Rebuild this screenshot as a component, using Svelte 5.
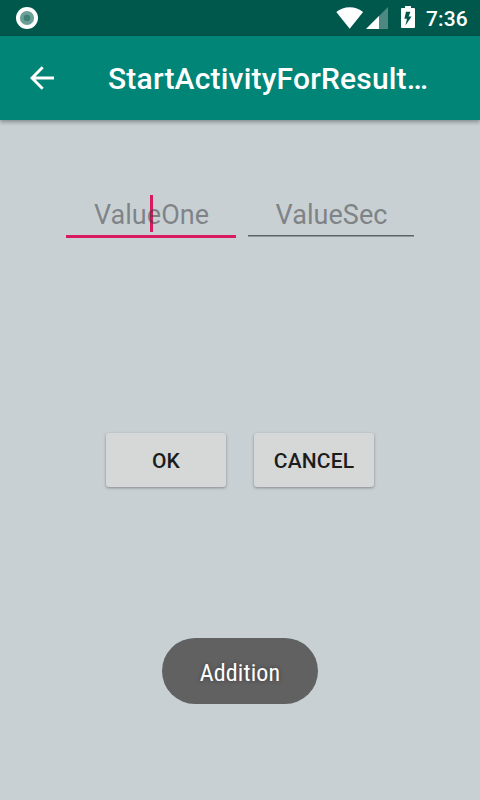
<script>
  const fields = [
    { label: 'ValueOne', focused: true },
    { label: 'ValueSec', focused: false }
  ];
  const buttons = ['OK', 'CANCEL'];
</script>

<div class="screen">
  <div class="status">
    <svg class="dot" width="22" height="22" viewBox="0 0 22 22">
      <circle cx="11" cy="11" r="11" fill="#fff" />
      <circle cx="11" cy="11" r="7.1" fill="#6b9f97" />
      <circle cx="11" cy="11" r="3.3" fill="#3d8177" />
    </svg>
    <svg class="wifi" width="28" height="22" viewBox="0 0 28 22">
      <path d="M0.3 5Q6 0.2 13.7 0.2T27.1 5L13.7 21.8Z" fill="#fff" />
    </svg>
    <svg class="signal" width="22" height="22" viewBox="0 0 22 22">
      <path d="M0 22L22 0V22Z" fill="#fff" fill-opacity=".3" />
      <path d="M0 22L13 9V22Z" fill="#fff" />
    </svg>
    <svg class="battery" width="14" height="22" viewBox="0 0 14 22">
      <path fill-rule="evenodd" d="M4 0H10V2H13Q14 2 14 3V21Q14 22 13 22H1Q0 22 0 21V3Q0 2 1 2H4ZM9.4 5.8H5L3.4 12.8H6L4.4 19.4L10.6 10.4H7.6Z" fill="#fff" />
    </svg>
    <span class="clock">7:36</span>
  </div>
  <header>
    <svg class="back" width="24" height="24" viewBox="0 0 24 24">
      <path d="M12.7 1.2L2 12L12.7 22.8M2 12H24" fill="none" stroke="#fff" stroke-width="2.9" />
    </svg>
    <h1>StartActivityForResult…</h1>
  </header>
  <main>
    <div class="fields">
      {#each fields as field}
        <div class="field" class:focused={field.focused}>
          <span>{field.label}</span>
          {#if field.focused}<i class="caret"></i>{/if}
        </div>
      {/each}
    </div>
    <div class="buttons">
      {#each buttons as label}
        <button>{label}</button>
      {/each}
    </div>
    <div class="toast"><span>Addition</span></div>
  </main>
</div>

<style>
  :global(body) { margin: 0; }
  .screen {
    width: 480px;
    height: 800px;
    overflow: hidden;
    display: flex;
    flex-direction: column;
    background: #c8d0d4;
    font-family: Roboto, sans-serif;
  }
  .status {
    flex: none;
    height: 36px;
    display: flex;
    align-items: center;
    box-sizing: border-box;
    padding: 0 12px 0 16px;
    background: #00574b;
    color: #fff;
  }
  .dot { margin-right: auto; }
  .wifi { margin-right: 2px; }
  .signal { margin-right: 13px; }
  .battery { margin: 0 11px 2px 0; }
  .clock {
    font-size: 21px;
    font-weight: 500;
    line-height: 36px;
    width: 42px;
    padding-top: 1px;
    white-space: nowrap;
    letter-spacing: .15px;
  }
  header {
    flex: none;
    height: 84px;
    display: flex;
    align-items: center;
    box-sizing: border-box;
    padding-left: 30px;
    background: #008577;
    box-shadow: 0 2px 4px rgba(0, 0, 0, .34);
    z-index: 1;
  }
  h1 {
    margin: 2px 0 0 54px;
    font-size: 30px;
    font-weight: 500;
    line-height: 36px;
    letter-spacing: .19px;
    color: #fff;
    white-space: nowrap;
  }
  main {
    flex: 1;
    display: flex;
    flex-direction: column;
    align-items: center;
  }
  .fields {
    display: flex;
    gap: 12px;
    margin-top: 75px;
    height: 43px;
  }
  .field {
    position: relative;
    box-sizing: border-box;
    width: 166px;
    height: 42px;
    padding-left: 1px;
    border-bottom: 1px solid #929799;
    box-shadow: inset 0 -1px #5f6366;
    font-size: 27px;
    line-height: 40px;
    letter-spacing: .04px;
    text-align: center;
    color: #7f8385;
  }
  .field.focused {
    width: 170px;
    height: 43px;
    border-bottom: 3px solid #d81b60;
    box-shadow: none;
  }
  .caret {
    position: absolute;
    left: 84px;
    top: 0;
    width: 3px;
    height: 37px;
    background: #d81b60;
  }
  .focused span {
    position: relative;
    z-index: 1;
    color: rgba(55, 55, 55, .5);
  }
  .buttons {
    display: flex;
    gap: 28px;
    margin-top: 195px;
  }
  button {
    width: 120px;
    height: 54px;
    padding: 2px 0 0;
    border: 0;
    border-radius: 3px;
    background: #d6d8d7;
    box-shadow: 0 1px 3px rgba(0, 0, 0, .34);
    font: 500 21px Roboto, sans-serif;
    letter-spacing: .15px;
    color: #1b1c1c;
  }
  .toast {
    width: 156px;
    height: 66px;
    margin-top: 151px;
    border-radius: 33px;
    background: #616161;
    display: flex;
    align-items: center;
    justify-content: center;
    color: #fff;
    font-family: "Roboto Condensed", Roboto, sans-serif;
    font-stretch: 75%;
    font-size: 24px;
    letter-spacing: .12px;
    text-shadow: 0 0 4px rgba(0, 0, 0, .4);
  }
  .toast span { padding-top: 3px; }
</style>
